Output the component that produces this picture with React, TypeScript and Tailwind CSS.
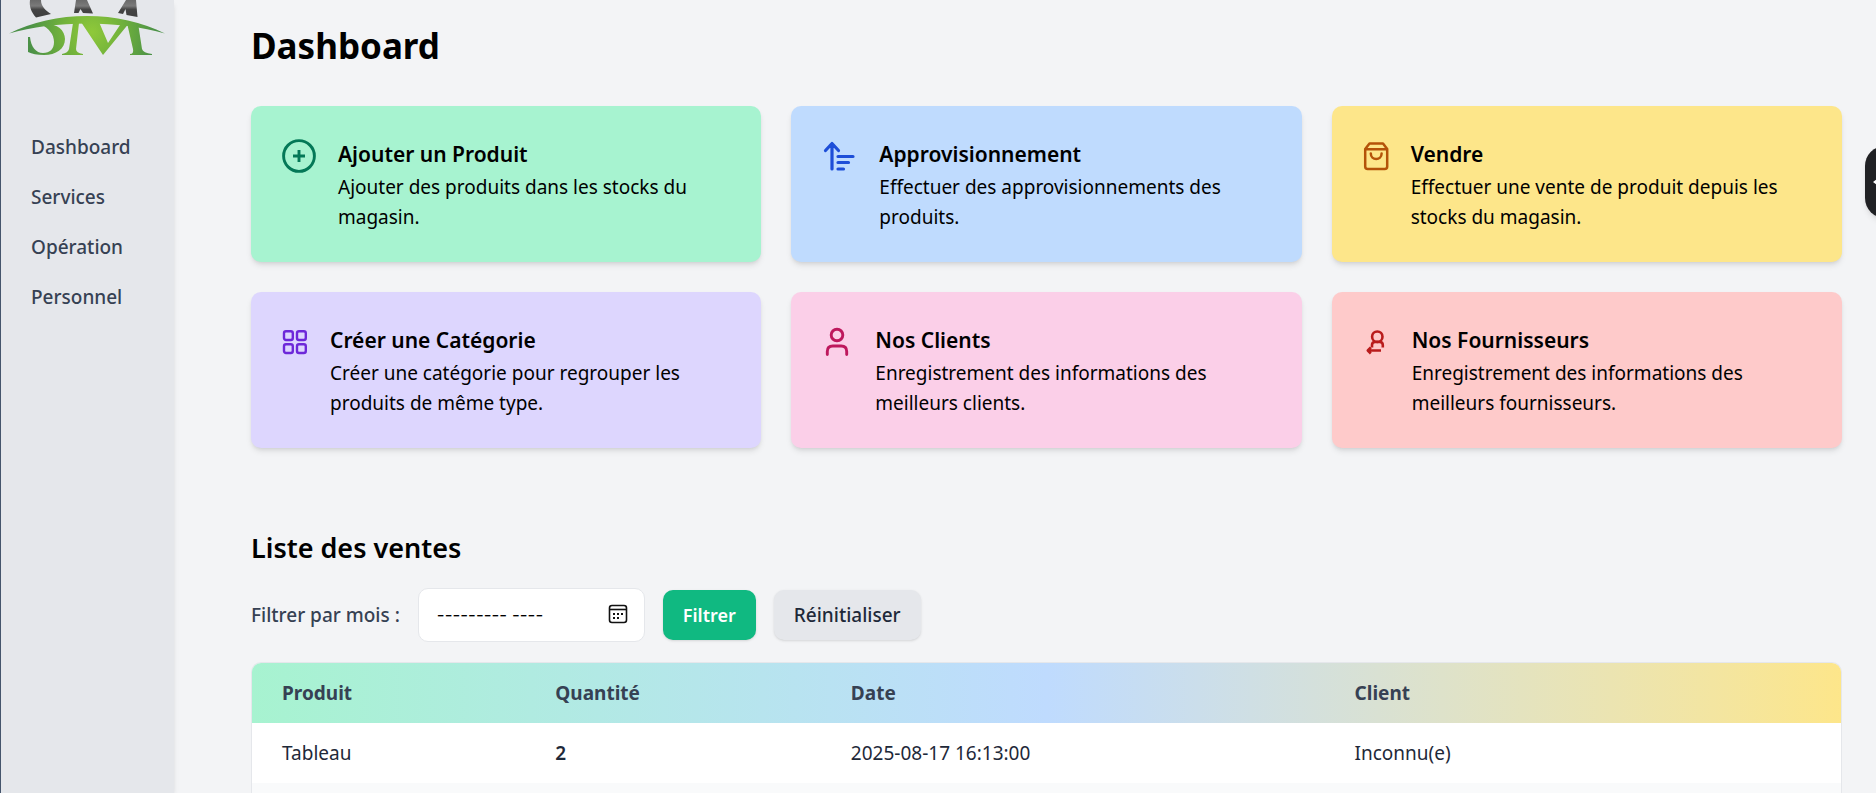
import React, { useState } from "react";

interface Shortcut {
  title: string;
  text: string;
  card: string;
  icon: React.ReactNode;
}

interface Sale {
  product: string;
  quantity: number;
  date: string;
  client: string;
}

const navLinks = ["Dashboard", "Services", "Opération", "Personnel"];

const stroke = {
  fill: "none",
  stroke: "currentColor",
  strokeLinecap: "round" as const,
  strokeLinejoin: "round" as const,
};

const shortcuts: Shortcut[] = [
  {
    title: "Ajouter un Produit",
    text: "Ajouter des produits dans les stocks du magasin.",
    card: "bg-[#a7f3d0]",
    icon: (
      <svg viewBox="0 0 36 40" className="h-10 w-9 text-[#047857]" {...stroke} strokeWidth="2.9">
        <circle cx="18" cy="19" r="15.4" />
        <path d="M18 13v12M12 19h12" strokeLinecap="butt" />
      </svg>
    ),
  },
  {
    title: "Approvisionnement",
    text: "Effectuer des approvisionnements des produits.",
    card: "bg-[#bfdbfe]",
    icon: (
      <svg viewBox="0 0 37 40" className="h-10 w-[37px] text-[#1d4ed8]" {...stroke} strokeWidth="3.2">
        <path d="M11 32V6.500M4.500 13.500L11 6.500l6.500 7M17 19.500h15M17 25.500h10.500M17 32h5.500" />
      </svg>
    ),
  },
  {
    title: "Vendre",
    text: "Effectuer une vente de produit depuis les stocks du magasin.",
    card: "bg-[#fde68a]",
    icon: (
      <svg viewBox="0 0 28 40" className="h-10 w-7 text-[#b45309]" {...stroke} strokeWidth="2.5">
        <path d="M3.200 12L7.500 6.500h13.500l4.200 5.500v17.500q0 2.500-2.500 2.500h-17q-2.500 0-2.500-2.500zM3.200 12.300h22M8.800 16.500c0 7.400 10.800 7.400 10.800 0" />
      </svg>
    ),
  },
  {
    title: "Créer une Catégorie",
    text: "Créer une catégorie pour regrouper les produits de même type.",
    card: "bg-[#ddd6fe]",
    icon: (
      <svg viewBox="0 0 28 40" className="h-10 w-7 text-[#6d28d9]" {...stroke} strokeWidth="2.4">
        <rect x="3" y="8.200" width="8.800" height="8.800" rx="2" />
        <rect x="16" y="8.200" width="8.800" height="8.800" rx="2" />
        <rect x="3" y="21.200" width="8.800" height="8.800" rx="2" />
        <rect x="16" y="21.200" width="8.800" height="8.800" rx="2" />
      </svg>
    ),
  },
  {
    title: "Nos Clients",
    text: "Enregistrement des informations des meilleurs clients.",
    card: "bg-[#fbcfe8]",
    icon: (
      <svg viewBox="0 0 33 40" className="h-10 w-[33px] text-[#be185d]" {...stroke} strokeWidth="2.9">
        <circle cx="16" cy="12" r="5.800" />
        <path d="M6.300 31.500v-3q0-5.500 5.500-5.500h8.400q5.500 0 5.500 5.500v3" />
      </svg>
    ),
  },
  {
    title: "Nos Fournisseurs",
    text: "Enregistrement des informations des meilleurs fournisseurs.",
    card: "bg-[#fecaca]",
    icon: (
      <svg viewBox="0 0 29 40" className="h-10 w-[29px] text-[#b91c1c]" {...stroke} strokeWidth="2.6">
        <circle cx="15.300" cy="13.700" r="5.200" />
        <path d="M10 24.500v-2.500q0-3 3-3h4.800q3 0 3 3v2.500M19 27.500h-13M8.800 24.500l-3 3 3 3" strokeLinecap="butt" />
      </svg>
    ),
  },
];

const sales: Sale[] = [
  { product: "Tableau", quantity: 2, date: "2025-08-17 16:13:00", client: "Inconnu(e)" },
];

function Logo() {
  return (
    <svg viewBox="1 0 173 55" className="h-[55px] w-full" role="img" aria-label="Logo">
      <defs>
        <radialGradient id="leaf" gradientUnits="userSpaceOnUse" cx="92" cy="32" r="64">
          <stop offset="0" stopColor="#8fc93a" />
          <stop offset="0.5" stopColor="#6fb03c" />
          <stop offset="1" stopColor="#4b9147" />
        </radialGradient>
        <linearGradient id="steel" gradientUnits="userSpaceOnUse" x1="0" y1="0" x2="0" y2="17">
          <stop offset="0" stopColor="#6a6a6a" />
          <stop offset="0.35" stopColor="#7a7a7a" />
          <stop offset="0.55" stopColor="#454545" />
          <stop offset="1" stopColor="#3f3f3f" />
        </linearGradient>
      </defs>
      <g fill="url(#steel)">
        <path d="M30 0h11c0 6 4 10 10 14l-15 3.500C31 12 29 6 30 0z" />
        <path d="M76 0h11l6 13.500-10-.5-2.500-4-2 4h-4.500z" />
        <path d="M126 0h10l1.500 17-11-2-1-6-2.500 5-5-1z" />
      </g>
      <g fill="url(#leaf)">
        <path d="M9 33.500C54 10 120 10 165 33.500 120 20 54 20 9 33.500z" />
        <path d="M41 24c14-2 24 5 24 15 0 10-9 16-21 16-7 0-12-1-16-3V37h2c1 10 6 16 13 16 7 0 11-4 11-11 0-8-5-13-13-18z" />
        <path d="M73 23h6l-3 26q0 4 7 5v1H62v-1q6-1 7-5zM81 22h18l9 21 14-21h8l-27 33z" />
        <path d="M127 23h11l4 26q1 4 10 5v1h-22v-1q4 0 3-5z" />
      </g>
    </svg>
  );
}

function ShortcutCard({ shortcut }: { shortcut: Shortcut }) {
  return (
    <div
      className={`flex items-start gap-[21px] rounded-[10px] px-[30px] pt-[31px] pb-[30px] shadow-md ${shortcut.card}`}
    >
      <span className="shrink-0">{shortcut.icon}</span>
      <div>
        <h2 className="text-[21px] leading-[35px] font-semibold">{shortcut.title}</h2>
        <p className="text-[19px] leading-[30px]">{shortcut.text}</p>
      </div>
    </div>
  );
}

export default function App() {
  const [month, setMonth] = useState("--------- ----");

  return (
    <div className="flex min-h-screen bg-gray-100 font-['Noto_Sans',sans-serif] text-[19px] leading-[30px] text-black">
      {/* Sidebar */}
      <aside className="w-[174px] shrink-0 border-l border-slate-600 bg-[#e5e7eb] shadow-md">
        <Logo />
        <nav className="mt-[77px] flex flex-col gap-5 pl-[30px] font-medium text-gray-700">
          {navLinks.map((link) => (
            <a key={link} href="#">
              {link}
            </a>
          ))}
        </nav>
      </aside>

      <main className="min-w-0 flex-1 pr-[34px] pl-[77px]">
        <h1 className="pt-[23px] text-[35px] leading-[45px] font-bold">Dashboard</h1>

        {/* Shortcuts */}
        <section className="mt-[38px] grid grid-cols-3 gap-[30px]">
          {shortcuts.map((shortcut) => (
            <ShortcutCard key={shortcut.title} shortcut={shortcut} />
          ))}
        </section>

        {/* Sales */}
        <section className="mt-20">
          <h2 className="text-[27px] leading-[40px] font-semibold">Liste des ventes</h2>

          <form className="mt-5 flex items-center gap-[18px]" onSubmit={(e) => e.preventDefault()}>
            <label htmlFor="month" className="font-medium text-gray-700">
              Filtrer par mois :
            </label>
            <div className="relative">
              <input
                id="month"
                type="text"
                value={month}
                onChange={(e) => setMonth(e.target.value)}
                className="h-[54px] w-[227px] rounded-[10px] border border-gray-200 bg-white px-[18px] font-['Inter',sans-serif] text-[17px]"
              />
              <svg
                viewBox="0 0 20 20"
                className="pointer-events-none absolute top-4 right-[17px] h-5 w-5"
                fill="none"
                stroke="#111"
                strokeWidth="1.6"
              >
                <rect x="1.500" y="1.500" width="17" height="17" rx="2.500" />
                <path d="M1.500 5.500h17" />
                <path d="M5 10h2M9 10h2M13 10h2M5 14h2M9 14h2" strokeWidth="2" />
              </svg>
            </div>
            <button type="submit" className="h-[50px] rounded-[10px] bg-[#10b981] px-5 text-[18px] font-semibold text-white shadow-sm">
              Filtrer
            </button>
            <button
              type="button"
              onClick={() => setMonth("--------- ----")}
              className="h-[50px] rounded-[10px] bg-gray-200 px-5 font-medium text-gray-800 shadow-sm"
            >
              Réinitialiser
            </button>
          </form>

          <div className="mt-5 overflow-hidden rounded-t-[10px] border-x border-t border-gray-200 bg-gray-50 pb-[10px]">
            <table className="w-full table-fixed text-left text-gray-800">
              <colgroup>
                <col className="w-[17.2%]" />
                <col className="w-[18.6%]" />
                <col className="w-[31.7%]" />
                <col className="w-[32.5%]" />
              </colgroup>
              <thead className="bg-linear-to-r from-[#a7f3d0] via-[#bfdbfe] to-[#fde68a] text-gray-700">
                <tr>
                  <th className="px-[30px] py-[15px] font-bold">Produit</th>
                  <th className="px-[30px] py-[15px] font-bold">Quantité</th>
                  <th className="px-[30px] py-[15px] font-bold">Date</th>
                  <th className="px-[30px] py-[15px] font-bold">Client</th>
                </tr>
              </thead>
              <tbody>
                {sales.map((sale) => (
                  <tr key={sale.date} className="bg-white">
                    <td className="px-[30px] py-[15px]">{sale.product}</td>
                    <td className="px-[30px] py-[15px] font-semibold">{sale.quantity}</td>
                    <td className="px-[30px] py-[15px]">{sale.date}</td>
                    <td className="px-[30px] py-[15px]">{sale.client}</td>
                  </tr>
                ))}
              </tbody>
            </table>
          </div>
        </section>
      </main>

      {/* Side panel handle */}
      <button
        aria-label="Ouvrir"
        className="fixed top-[146px] right-[-29px] flex h-[72px] w-10 items-center rounded-[24px] bg-[#202124] pl-2 shadow-md"
      >
        <svg viewBox="0 0 20 20" className="h-5 w-5" fill="#fff">
          <path d="M0 10l4-3 3-7h6l-4 10 4 10H7l-3-7z" />
        </svg>
      </button>
    </div>
  );
}
